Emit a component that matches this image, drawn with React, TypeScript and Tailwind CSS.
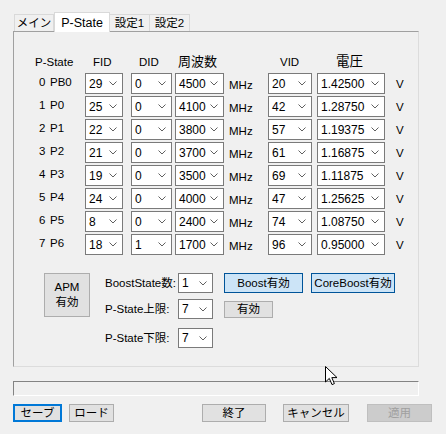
import React from 'react';

const rows: string[][] = [
  ['0', 'PB0', '29', '0', '4500', '20', '1.42500'],
  ['1', 'P0', '25', '0', '4100', '42', '1.28750'],
  ['2', 'P1', '22', '0', '3800', '57', '1.19375'],
  ['3', 'P2', '21', '0', '3700', '61', '1.16875'],
  ['4', 'P3', '19', '0', '3500', '69', '1.11875'],
  ['5', 'P4', '24', '0', '4000', '47', '1.25625'],
  ['6', 'P5', '8', '0', '2400', '74', '1.08750'],
  ['7', 'P6', '18', '1', '1700', '96', '0.95000'],
];

const Chevron = () => (
  <svg width="8" height="5" viewBox="0 0 8 5" className="shrink-0">
    <polyline points="0.5,0.5 4,4 7.5,0.5" fill="none" stroke="#606060" strokeWidth="1" />
  </svg>
);

const Combo = ({ value, w, h = 'h-[21px]' }: { value: string; w: string; h?: string }) => (
  <div className={`${w} ${h} bg-white border border-[#7a7a7a] flex items-center justify-between pl-[3px] pr-[5px]`}>
    <span className="text-[12px]">{value}</span>
    <Chevron />
  </div>
);

const Btn = ({ label, cls }: { label: string; cls: string }) => (
  <div className={`flex items-center justify-center border ${cls}`}>{label}</div>
);

const App: React.FC = () => {
  return (
    <div className="relative w-[446px] h-[434px] bg-[#f0f0f0] text-[11.5px] leading-[14px] text-black whitespace-nowrap font-['Liberation_Sans','Noto_Sans_CJK_JP',sans-serif] overflow-hidden">
      {/* tabs */}
      <div className="flex items-end h-[31px] pl-[14px]">
        <div className="w-[40px] h-[17px] flex items-center justify-center border border-b-0 border-[#d9d9d9]">メイン</div>
        <div className="relative z-10 w-[56px] h-[20px] mb-[-1px] flex items-center justify-center bg-white border border-b-0 border-[#d9d9d9] text-[12.5px]">P-State</div>
        <div className="w-[40px] h-[17px] flex items-center justify-center border border-b-0 border-l-0 border-[#d9d9d9]">設定1</div>
        <div className="w-[40px] h-[17px] flex items-center justify-center border border-b-0 border-l-0 border-[#d9d9d9]">設定2</div>
      </div>

      {/* panel */}
      <div className="ml-[13px] w-[406px] h-[336px] border-l border-t border-[#a0a0a0] border-r-[#dcdcdc] border-b-[#dcdcdc] border-r border-b">
        <div className="flex items-center h-[18px] mt-[21px] pl-[21px]">
          <span className="w-[58px]">P-State</span>
          <span className="w-[46px]">FID</span>
          <span className="w-[39px]">DID</span>
          <span className="w-[102px] text-[13px]">周波数</span>
          <span className="w-[56px]">VID</span>
          <span className="text-[13.5px]">電圧</span>
        </div>

        <div className="flex flex-col gap-[2px] mt-[2px]">
          {rows.map((r) => (
            <div key={r[0]} className="flex items-center h-[21px] pl-[25px]">
              <span className="w-[11px] pb-[3px]">{r[0]}</span>
              <span className="w-[35px] pb-[3px]">{r[1]}</span>
              <Combo value={r[2]} w="w-[38px]" />
              <div className="ml-[8px]">
                <Combo value={r[3]} w="w-[41px]" />
              </div>
              <div className="ml-[3px]">
                <Combo value={r[4]} w="w-[49px]" />
              </div>
              <span className="ml-[5px] w-[39px] pt-[3px]">MHz</span>
              <Combo value={r[5]} w="w-[44px]" />
              <div className="ml-[5px]">
                <Combo value={r[6]} w="w-[68px]" />
              </div>
              <span className="ml-[11px]">V</span>
            </div>
          ))}
        </div>

        <div className="flex mt-[18px] pl-[30px]">
          <div className="w-[46px] h-[44px] bg-[#e1e1e1] border border-[#adadad] flex flex-col items-center justify-center leading-[15px]">
            <span>APM</span>
            <span>有効</span>
          </div>
          <div className="ml-[15px] flex flex-col">
            <div className="flex items-center h-[20px]">
              <span className="w-[73px]">BoostState数:</span>
              <Combo value="1" w="w-[35px]" h="h-[20px]" />
              <Btn label="Boost有効" cls="ml-[11px] w-[79px] h-[20px] bg-[#cce4f7] border-[#005499]" />
              <Btn label="CoreBoost有効" cls="ml-[8px] w-[84px] h-[20px] bg-[#cce4f7] border-[#005499]" />
            </div>
            <div className="flex items-center h-[20px] mt-[6px]">
              <span className="w-[73px]">P-State上限:</span>
              <Combo value="7" w="w-[35px]" h="h-[20px]" />
              <Btn label="有効" cls="ml-[11px] w-[49px] h-[17px] bg-[#e1e1e1] border-[#adadad]" />
            </div>
            <div className="flex items-center h-[20px] mt-[9px]">
              <span className="w-[73px]">P-State下限:</span>
              <Combo value="7" w="w-[35px]" h="h-[20px]" />
            </div>
          </div>
        </div>
      </div>

      {/* status box */}
      <div className="ml-[13px] mt-[14px] w-[406px] h-[15px] border-t border-l border-[#838383] border-r border-b border-r-white border-b-white" />

      {/* bottom buttons */}
      <div className="flex mt-[8px] h-[18px]">
        <Btn label="セーブ" cls="ml-[13px] w-[49px] h-[18px] bg-[#e1e1e1] border-2 border-[#0078d7]" />
        <Btn label="ロード" cls="ml-[7px] w-[45px] h-[18px] bg-[#e1e1e1] border-[#adadad]" />
        <Btn label="終了" cls="ml-[88px] w-[64px] h-[18px] bg-[#e1e1e1] border-[#adadad]" />
        <Btn label="キャンセル" cls="ml-[17px] w-[66px] h-[18px] bg-[#e1e1e1] border-[#adadad]" />
        <Btn label="適用" cls="ml-[18px] w-[65px] h-[18px] bg-[#cccccc] border-[#bfbfbf] text-[#a0a0a0]" />
      </div>

      {/* mouse cursor */}
      <svg className="absolute left-[325px] top-[366px]" width="13" height="20" viewBox="0 0 13 20">
        <path d="M0.5 0.5 L0.5 16 L4.3 12.4 L7 18.6 L9.4 17.6 L6.8 11.6 L12 11.6 Z" fill="white" stroke="black" strokeWidth="1" strokeLinejoin="round" />
      </svg>
    </div>
  );
};

export default App;
